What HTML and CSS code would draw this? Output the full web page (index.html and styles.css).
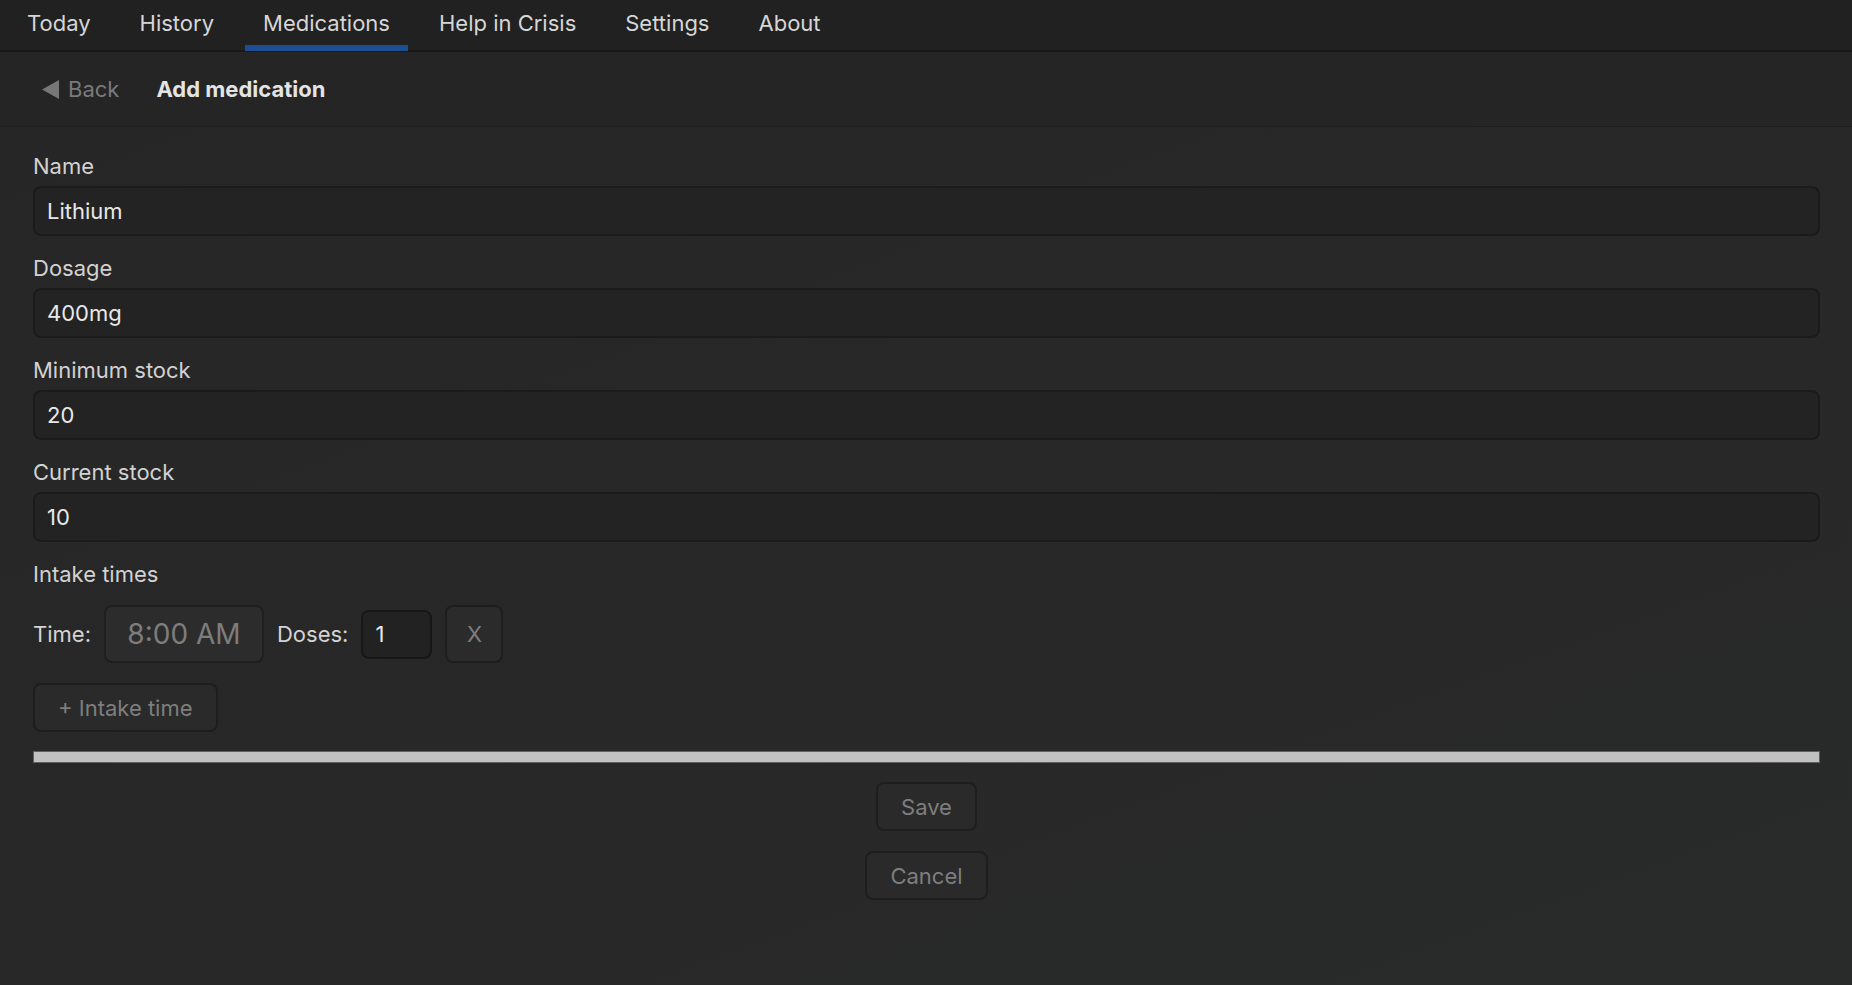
FILE: index.html
```html
<!DOCTYPE html>
<html lang="en">
<head>
  <meta charset="UTF-8" />
  <meta name="viewport" content="width=device-width, initial-scale=1.0" />
  <title>Add medication</title>
  <link rel="stylesheet" href="styles.css">
</head>
<body>

  <nav class="tabs">
    <a class="tab" href="#">Today</a>
    <a class="tab" href="#">History</a>
    <a class="tab active" href="#">Medications</a>
    <a class="tab" href="#">Help in Crisis</a>
    <a class="tab" href="#">Settings</a>
    <a class="tab" href="#">About</a>
  </nav>

  <header class="subbar">
    <a class="back" href="#">
      <svg width="17" height="19" viewBox="0 0 17 19"><polygon points="17,0 17,19 0,9.5" fill="#777"/></svg>
      <span>Back</span>
    </a>
    <h1 class="page-title">Add medication</h1>
  </header>

  <main class="form">
    <div class="field">
      <label for="name">Name</label>
      <input id="name" type="text" value="Lithium">
    </div>
    <div class="field">
      <label for="dosage">Dosage</label>
      <input id="dosage" type="text" value="400mg">
    </div>
    <div class="field">
      <label for="min-stock">Minimum stock</label>
      <input id="min-stock" type="text" value="20">
    </div>
    <div class="field">
      <label for="cur-stock">Current stock</label>
      <input id="cur-stock" type="text" value="10">
    </div>

    <div class="intake">
      <label>Intake times</label>
      <div class="intake-row">
        <span>Time:</span>
        <div class="time-box">8:00 AM</div>
        <span>Doses:</span>
        <input class="doses" type="text" value="1">
        <button class="btn btn-square">X</button>
      </div>
      <button class="btn add-time">+ Intake time</button>
    </div>

    <div class="bar"></div>

    <div class="actions">
      <button class="btn">Save</button>
      <button class="btn">Cancel</button>
    </div>
  </main>

</body>
</html>
```

FILE: styles.css
```css
* {
  box-sizing: border-box;
}

body {
  margin: 0;
  min-height: 100vh;
  font-family: 'Inter', 'Noto Sans', sans-serif;
  font-size: 22px;
  color: #d4d4d4;
  background: linear-gradient(160deg, #262626, #282828 60%, #292a2a);
}

.tabs {
  display: flex;
  gap: 13px;
  height: 52px;
  padding: 0 9px;
  background: #212121;
  border-bottom: 2px solid #191919;
}

.tab {
  display: flex;
  align-items: center;
  padding: 0 18px;
  margin-bottom: -1px;
  border-bottom: 6px solid transparent;
  color: #d6d6d6;
  text-decoration: none;
}

.tab.active {
  border-bottom-color: #1b4e93;
}

.subbar {
  display: flex;
  align-items: center;
  gap: 37px;
  height: 75px;
  padding-left: 42px;
  background: #252525;
  border-bottom: 1px solid #1f1f1f;
}

.back {
  display: flex;
  align-items: center;
  gap: 9px;
  color: #7a7a7a;
  text-decoration: none;
}

.page-title {
  margin: 0;
  font-size: 22px;
  font-weight: 700;
  color: #e4e4e4;
}

.form {
  padding: 26px 32px 40px 33px;
}

.field {
  margin-bottom: 19px;
}

.field label,
.intake label {
  display: block;
  line-height: 26px;
  margin-bottom: 7px;
  color: #d2d2d2;
}

.field input {
  display: block;
  width: 100%;
  height: 50px;
  padding: 0 12px;
  font: inherit;
  color: #e8e8e8;
  background: #232323;
  border: 2px solid #1b1b1b;
  border-radius: 8px;
  outline: none;
}

.intake {
  margin-top: 19px;
}

.intake label {
  margin-bottom: 18px;
}

.intake-row {
  display: flex;
  align-items: center;
  gap: 13px;
}

.time-box {
  display: flex;
  align-items: center;
  justify-content: center;
  width: 160px;
  height: 58px;
  font-size: 28px;
  color: #7d7d7d;
  background: #2c2c2c;
  border: 2px solid #1f1f1f;
  border-radius: 8px;
}

.doses {
  width: 71px;
  height: 49px;
  padding: 0 12px;
  font: inherit;
  color: #e8e8e8;
  background: #222;
  border: 2px solid #171717;
  border-radius: 8px;
  outline: none;
}

.btn {
  height: 49px;
  padding: 0 23px;
  font: inherit;
  color: #7e7e7e;
  background: #2a2a2a;
  border: 2px solid #1e1e1e;
  border-radius: 8px;
  cursor: pointer;
}

.btn-square {
  width: 58px;
  height: 58px;
  padding: 0;
  background: #2b2b2b;
}

.add-time {
  display: block;
  margin-top: 20px;
}

.bar {
  height: 12px;
  margin-top: 19px;
  background: #c1c1c1;
  border: 1px solid #5f5f5f;
}

.actions {
  display: flex;
  flex-direction: column;
  align-items: center;
  gap: 20px;
  margin-top: 19px;
}
```
